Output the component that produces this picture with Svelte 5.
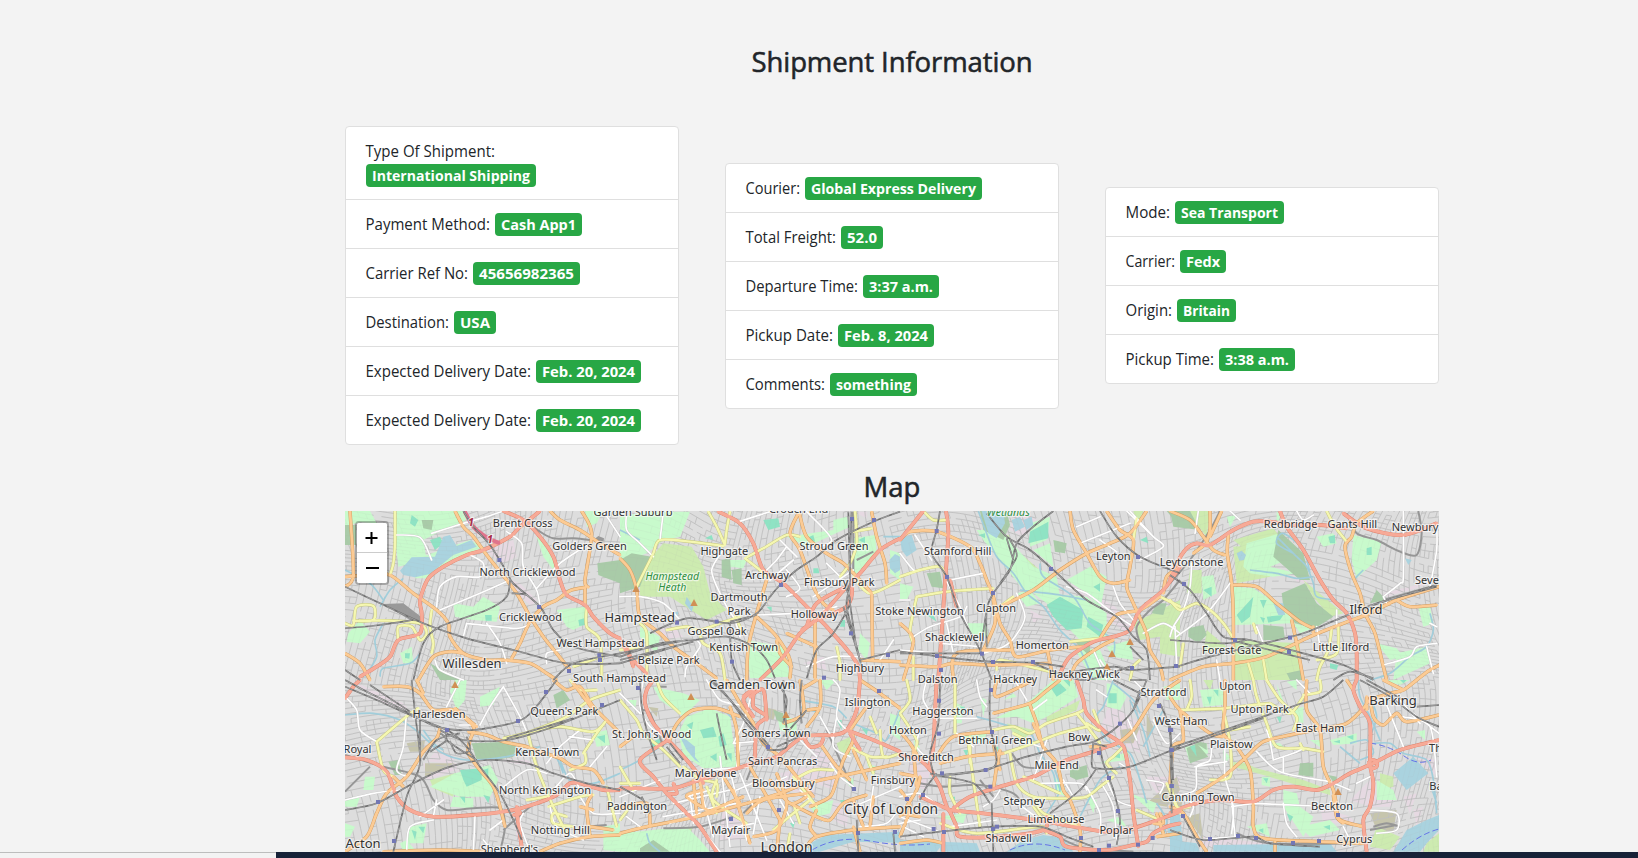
<script>
  const cards = [
    [
      ['Type Of Shipment:', 'International Shipping', 170, 130],
      ['Payment Method:', 'Cash App1', 87, 125],
      ['Carrier Ref No:', '45656982365', 107, 103],
      ['Destination:', 'USA', 42, 84],
      ['Expected Delivery Date:', 'Feb. 20, 2024', 105, 166],
      ['Expected Delivery Date:', 'Feb. 20, 2024', 105, 166],
    ],
    [
      ['Courier:', 'Global Express Delivery', 177, 55],
      ['Total Freight:', '52.0', 42, 91],
      ['Departure Time:', '3:37 a.m.', 76, 113],
      ['Pickup Date:', 'Feb. 8, 2024', 96, 88],
      ['Comments:', 'something', 87, 80],
    ],
    [
      ['Mode:', 'Sea Transport', 109, 45],
      ['Carrier:', 'Fedx', 46, 50],
      ['Origin:', 'Britain', 59, 47],
      ['Pickup Time:', '3:38 a.m.', 76, 89],
    ],
  ];

  // Each sector stores its geometry at three units per map pixel.
  const sectors = [
    {
      x: 340, y: 500,
      park: '15,33 90,33 110,70 60,66 15,80|170,33 370,33 380,60 290,100 250,120 260,180 175,200 165,110|590,110 625,130 650,190 640,210 610,170|340,310 400,320 430,290 480,320 470,365 400,360 345,350|650,330 735,320 740,370 700,390 680,380|25,400 60,360 90,395 60,430 20,425|180,460 215,440 220,490 190,490|245,170 390,120 430,140 330,190 260,235 225,235|735,33 790,33 770,70 740,80',
      wood: '15,75 48,75 48,135 15,135|245,60 280,60 275,90 250,85|772,190 840,180 840,250 800,235 775,225|270,490 360,540 300,540',
      pitch: '215,45 235,60 225,80 210,70|270,120 300,110 310,130 285,150|435,345 455,345 455,362 437,362|715,360 733,355 735,375 718,378|195,460 210,460 208,476 195,474',
      land: '430,150 520,120 530,170 490,190|500,235 540,250 590,300 575,320 520,270',
      water: '180,212 215,172 285,170 310,110 330,105 350,138 395,120 410,140 340,165 270,222 225,232 190,225',
      stream: '190,235 150,270 120,320|130,370 105,420 110,470 75,530|15,210 90,250 130,300|120,530 130,505 210,490 240,460',
      shed: '130,312 190,310 240,348 240,378 160,330|760,120 775,108 792,115 790,130',
      white: '275,100 370,70 440,50 490,33|165,105 240,112 275,180|290,320 300,260 350,230 420,230 430,190 390,165|300,330 420,280 510,240|500,95 545,130 550,200 590,270 600,320|590,265 660,190 750,130|380,370 530,385 570,370|440,370 480,430 500,490|620,490 620,460 660,450|790,33 840,110|285,480 300,510 370,540|380,370 370,410',
      yellow: '165,33 165,130 160,190 150,225|15,370 40,375 50,320 100,318 100,360 40,362|60,362 150,362 240,370 260,400 240,420 215,380 175,380 175,420|275,330 270,380 280,430 275,460|740,320 740,380 780,420 785,540|700,500 780,470',
      orange: '345,33 370,80 400,110 440,165 480,215 530,280 570,350 610,410 650,460 690,510|15,230 90,225 150,225 220,280 290,330 325,370 330,410 370,460 440,480 490,480 570,490 620,520 650,540|840,165 780,130 720,90 660,60 630,33|745,262 735,240 755,100 725,33|735,262 690,272 650,300 610,320 570,365 540,430 515,475|15,460 60,490 90,540|235,540 280,470 330,455 370,460|15,260 40,225 30,33|735,262 735,315',
      red: '60,530 110,500 150,470 175,420 240,400 245,340 240,300 265,235 310,200 380,165 430,150 510,110 535,85 560,65 600,33|490,33 550,60 600,110 640,170 660,240 680,285 735,315 760,350 810,400 840,415',
      pink: '375,36 400,80 440,112 475,128',
      rail: '370,33 400,80 450,135 500,215 520,250 600,320 640,390 700,440 840,470|15,260 120,310 250,370 380,415 520,450 680,490 840,490|15,385 120,375 220,360|510,240 500,290 440,330 300,380 250,430 220,540|515,280 560,285 600,320|640,540 700,490 840,460|15,510 60,540',
      grey: '490,33 545,58 600,95 640,115 700,115 750,120 780,120',
      stations: '478,180 597,321 778,466 780,480 687,513',
    },
    {
      x: 620, y: 460,
      park: '80,155 210,155 180,230 130,240 80,280 0,310 0,170|325,300 380,300 370,325 330,320|700,235 765,225 770,280 700,350|720,520 750,550 740,600 715,570|500,230 640,210 640,180 680,170 690,200 560,260|380,540 490,560 510,650 390,655|810,270 840,280 840,360 810,340|60,500 120,530 110,580 60,530',
      wood: '0,300 35,280 95,290 60,380 0,400|305,300 330,295 335,360 305,350|335,330 365,325 365,375 340,370',
      meadow: '95,290 130,250 215,260 250,320 270,400 320,450 260,480 150,410 60,410 60,370|140,160 200,160 180,200 140,235',
      pitch: '430,180 475,175 480,200 445,210|255,235 275,225 280,240|560,235 580,225 585,245|580,325 595,325 598,340 580,340|440,440 455,440 455,455|665,480 675,480 675,500 660,500|715,240 735,230 735,250',
      land: '120,500 160,500 190,530 130,540|550,610 610,590 620,630|700,155 740,155 740,175',
      water: '808,300 825,282 840,290 840,330 825,340 810,325|200,410 220,440 215,455 195,430|165,455 175,455 172,470',
      stream: '0,210 60,240|790,230 840,230',
      white: '450,155 357,185|20,155 20,210 60,250 100,290|130,155 120,240|480,240 530,290|560,155 635,240 560,270|310,270 275,330 300,400 340,470 370,480|410,465 540,460|450,360 520,300|500,330 540,385 500,410|0,410 60,410 130,430 180,480|195,650 200,620 240,560 230,540|580,410 700,330|610,450 650,440|500,260 470,300 440,330|560,620 640,590 720,590|820,540 780,600|345,480 360,530|620,310 660,350',
      yellow: '330,155 320,210 315,250|265,155 290,200 315,255|50,380 75,330 100,280 120,240 210,245 310,258|380,292 430,265 500,225 540,230|375,295 420,330 440,350|705,155 710,250 690,310 660,350|700,350 750,400 840,360|700,215 755,205|140,510 200,500 240,510 300,490 360,470|240,520 250,550 300,580 315,660|650,560 660,610 660,660|60,490 80,520 80,650|345,470 370,520|0,570 60,560',
      orange: '0,295 30,330 50,390 60,470 120,520 160,560 230,610 290,655|535,160 510,220 540,270 580,380 610,430 640,450|538,160 560,230 620,280 670,310 720,360 755,400|755,155 770,230 795,310 800,370|440,360 410,460 385,560 380,660|585,470 585,655|755,400 758,600|410,470 470,530 510,600 510,655|500,520 590,560|720,600 840,605|470,540 480,580 515,620',
      red: '295,155 360,190 400,250 430,330 490,370 570,450 620,500 690,580 715,620 720,660|840,235 780,270 720,340 690,370|420,660 490,590 540,520 600,470 680,380|545,510 590,480 680,440 690,380 590,430 560,500|0,540 30,590 80,640|20,560 40,620',
      rail: '695,155 690,300 690,370 680,440 710,560 730,640|675,380 690,430 640,520 590,570 560,655|840,155 760,185 650,240 590,290 530,330 480,375 450,410 410,460 330,490 200,475 90,520|0,590 120,550 220,540 320,530 400,560 440,600 465,655|0,600 220,545|0,610 180,555|670,440 720,600|720,600 840,570|680,360 710,570|330,490 335,600 360,660|690,370 685,155|0,580 200,540|330,485 410,465',
      grey: '710,300 760,275|700,155 700,340',
      stations: '696,177 762,180 290,485 171,488 483,375 336,605 804,585 612,653 693,520',
    },
    {
      x: 900, y: 500,
      park: '230,90 300,90 400,200 470,230 480,290 370,270 300,180 250,120|400,280 500,285 560,290 620,340 620,410 540,420 490,370 440,310|390,70 450,50 440,120 390,140|500,240 570,200 620,230 600,330 560,280|0,250 40,260 20,300 0,300|200,370 260,370 265,410 210,400|520,440 600,450 640,540 580,540|350,280 390,270 420,310 380,320|450,130 460,200 400,150|620,440 690,420 700,480 640,470',
      wood: '80,220 120,215 130,265 95,260|525,425 570,420 570,470|770,310 800,310 790,345 755,340|800,33 840,33 840,80|240,33 250,90 310,120 330,75 320,33|460,120 500,130 495,160 465,155',
      meadow: '280,115 325,105 350,150 425,215 400,250 370,235 300,165|700,370 840,300 840,400 720,420|780,400 840,380 840,470 780,460|700,33 730,33 710,80',
      pitch: '390,95 445,65 445,115 385,130|440,315 480,290 550,330 545,385 500,390 460,350|565,350 610,375 600,410 560,380|580,260 600,250 600,275|80,345 100,345 110,365|720,120 740,110 745,130|235,105 255,100 255,115',
      land: '510,250 560,275 640,315 700,380 680,400 600,340|340,50 380,40 410,60 370,110 330,90|390,330 430,350 400,370',
      water: '245,33 310,33 315,70 290,115 265,100|0,115 35,105 50,150 20,170 5,150|335,60 360,50 375,80 345,95|370,60 395,50 400,75 380,90',
      stream: '235,33 260,100 290,170 340,220 380,280 430,320 480,390 540,450 580,540|420,190 430,230 520,290 570,370 640,420 640,470|360,270 480,285 560,300',
      white: '0,160 40,210 60,210|45,105 95,180|150,240 250,220|140,245 180,320 210,400|40,410 90,380 180,350 200,320|350,280 375,350 345,410 310,440 250,460|500,260 560,280 640,340 700,380|540,130 690,70|690,33 760,110 790,140 720,180|640,260 660,310 700,360|600,120 650,155|0,450 160,460 300,450|680,33 760,110|0,300 30,300|120,430 240,440|140,370 160,460|580,450 620,540|730,400 790,370 840,400|640,540 600,480|530,80 600,50',
      yellow: '70,33 100,60 140,60|0,230 60,210 120,200 140,230|50,290 140,275 200,270 280,265|50,290 30,390 40,430|710,55 700,120|780,290 840,320|510,425 600,415|40,540 40,470|290,510 300,480 390,500 470,520|300,320 340,290|690,540 700,500 720,480',
      orange: '0,120 30,95 110,95 210,140 240,190 260,240 280,290 300,370 330,420 350,470 450,450 550,440|510,33 520,90 560,160 600,230 640,250 690,240|300,320 400,270 480,210 560,160 630,130 690,100 740,33|620,33 660,90 700,120 690,200 680,260 700,310 740,400 750,450 780,500 790,540|600,415 650,345 720,330 780,290|280,300 285,370 250,450|0,495 110,500 160,490 280,495 450,490|160,540 170,460 330,450|0,370 40,420 10,540|510,540 530,490 600,440 640,420|840,200 800,230 790,280|440,440 460,540',
      red: '70,33 40,70 0,120|138,33 145,100 135,250 125,400 115,540|150,240 170,320|480,520 510,470 580,425 640,410 690,390 720,330 790,270 840,200',
      rail: '260,40 320,110 390,150 460,210 560,300 650,350 700,410 740,450 750,540|460,33 400,80 350,130 330,210 280,280 260,330 260,440|120,33 110,90 95,160 140,230 180,340 240,450 275,540|0,455 120,470 270,485 400,488 490,500|600,33 650,110 720,170 840,220|330,120 350,170 300,250|0,460 240,460|480,520 640,500 690,510 840,500|690,440 730,480|260,330 240,460|320,115 340,180|400,490 550,540 690,500',
      grey: '840,240 790,300 750,330 710,380 720,430',
      stations: '110,93 141,231 279,279 453,207 714,171 246,461 279,486 399,486 111,468 123,510 696,504 828,498',
    },
    {
      x: 1170, y: 500,
      park: '220,200 230,130 330,100 350,180 300,200 380,220 310,230 240,220|190,260 250,265 350,330 370,370 190,375|95,230 130,225 140,280 100,300|550,105 635,125 620,180 560,235 545,180|440,110 490,100 500,130 460,140|680,460 770,440 780,490 670,540|745,320 780,320 790,370 760,380|370,370 430,385 390,400|620,430 680,445 700,470 660,480|320,33 330,50 320,80|170,50 200,45 180,80',
      wood: '335,280 405,250 440,310 490,350 435,385 375,370 340,320|55,385 100,375 110,405 85,430 55,410|280,375 340,380 345,420 280,420|325,90 400,160 420,240 390,240 310,170|350,520 395,510 400,540 360,540|0,33 60,33 90,90 10,80|620,270 650,300 600,310',
      meadow: '60,33 120,33 110,110 70,60|190,120 310,85 330,110 215,140|400,240 520,340 480,350 430,290|190,140 310,130 300,230 200,250|60,210 95,210 95,280 50,280|190,420 390,430 390,540 190,540|110,390 170,440 100,460',
      pitch: '200,345 250,290 240,350 215,370|270,300 290,300 280,325|290,350 340,345 330,360 295,368|590,145 605,140 605,165 590,165|475,110 495,105 495,130 480,130|100,270 125,260 125,290|480,490 505,495 500,510 480,505|270,350 285,355 280,370',
      land: '640,280 800,240 740,265 650,290|0,200 20,200 10,260|250,200 270,210 290,225|370,230 410,215 410,250 380,245',
      water: '200,160 215,152 228,165 222,180 208,182|310,310 340,310 345,345 325,345|705,175 725,180 715,195',
      stream: '320,110 380,170 410,200 430,250 440,290 500,300|370,160 320,130 340,100 400,150 420,220|240,210 320,220 380,235 430,230|780,340 790,390 770,440 720,470 660,520 600,540|580,210 555,235',
      white: '65,190 60,260 40,330 10,380 0,410|15,380 20,500|20,410 110,340 180,250|700,33 700,230 690,250 640,290|640,290 650,310|800,70 800,150 780,260|640,495 720,470 740,440 800,430|380,33 400,60 430,45|440,380 450,440|260,380 280,430|140,480 150,540|780,370 800,380|85,33 75,100|210,60 180,33|500,330 500,380|770,440 790,520',
      yellow: '0,300 30,330 80,310 120,330 160,370 190,415|470,33 495,80 530,125|485,385 475,450 450,500 440,540|250,370 260,400|505,380 500,460 440,480|235,490 250,540|280,480 290,540|40,430 30,500',
      orange: '0,33 60,60 100,110 130,150 165,165|70,160 110,130|120,33 120,90 110,125|155,33 120,110|175,105 172,160 185,250 190,350 190,540|185,255 260,260 320,310 390,365 430,385|610,33 560,70 545,110 525,140 545,220 570,280 585,340 615,400 640,500 650,540|0,540 100,500 190,490 290,470 420,410 520,370 600,340 680,300 840,250|680,300 720,320 800,315|365,360 380,430 400,540|840,480 780,510 740,540|580,345 660,310|430,400 430,380',
      red: '0,240 20,190 50,145 80,130 120,135 190,90 250,65 300,65 370,75 450,75 530,85|330,33 350,80 400,150 450,240 490,300 530,340 555,400 560,460 560,540|520,40 590,85 700,105 800,70',
      rail: '0,225 60,270 110,340 160,410 240,420 400,460 520,495 610,540|20,500 120,470 260,435 400,400 520,350 640,305 800,255|0,420 160,430 230,420|500,360 620,310 800,260|490,540 540,515 610,535|200,425 420,480',
      grey: '530,40 560,100 620,120 690,155 740,165 755,100 745,33|150,33 120,90 60,180 0,250|800,255 640,300',
      stations: '42,252 195,420 360,413 357,456 18,498',
    },
    {
      x: 340, y: 680,
      park: '345,280 450,255 475,300 450,350 360,350 270,320|330,33 345,0 380,0 375,60 350,90|75,290 105,290 100,330 70,330|210,440 260,430 250,490 200,490|420,50 480,20 460,75 420,80|15,430 45,440 30,470 15,470|340,350 400,355 400,385 330,380|790,440 840,430 840,515 790,510|0,360 60,350 50,380 15,380|760,160 800,150 810,195 770,200|180,490 200,480 230,515 190,515',
      wood: '395,190 500,185 530,200 520,230 470,240 410,240|145,245 175,240 185,285 165,285|640,45 670,30 690,60 650,85',
      meadow: '270,300 345,280 340,350 280,325',
      pitch: '360,270 425,265 425,300 380,320 370,300|430,270 445,265 445,290|235,440 255,440 250,460|360,350 375,350 375,370|770,170 795,165 795,190|430,345 450,350 445,370|215,450 230,455 225,480',
      land: '250,250 350,250 350,270 260,300|30,0 190,70 210,95 130,70|290,210 345,230 340,250 260,245|520,380 540,380 550,500 530,480|470,240 560,240 600,260 520,250',
      brown: '200,190 255,180 250,215 210,215|255,250 345,250 255,290',
      water: '15,495 25,490 25,500 15,510',
      stream: '15,105 100,100 180,120 240,160 300,215 380,240 500,230 600,200|250,150 280,190 310,210|660,240 690,300 760,310 840,280|620,230 650,235 670,280',
      white: '15,50 50,90 60,150 110,185|200,90 190,200 170,270 200,290|360,0 320,80|420,135 450,80 490,20|490,20 540,110 570,180|360,135 410,135|15,360 100,340 180,330|200,515 210,440 280,420|405,410 400,515|310,360 240,410|480,330 560,270 620,280|640,330 690,280 720,330|550,400 540,430 570,515|630,380 650,440 730,480|690,170 760,180|620,250 660,200 720,150|280,410 290,360|800,200 750,260|450,450 490,420|720,350 760,400 840,400|430,480 460,515',
      yellow: '110,185 130,270 160,290|110,185 205,105 235,85|490,175 570,155 680,110 750,60 840,30|565,165 590,260 640,380 680,460|570,155 660,140 760,155 800,120|735,220 735,250 690,270|625,380 720,350 760,345|730,220 770,160 800,120|620,350 560,360|680,410 640,400 640,430 700,440|690,0 720,30 770,30|800,320 830,440',
      orange: '130,20 200,20 240,40 280,90 340,90 400,140 390,180 385,220 420,270 460,320 480,380 495,440|230,0 250,40|15,515 80,470 110,400 140,340 200,290 250,215 290,175 300,145|385,155 440,165 490,185 560,200 600,215 660,235 700,260 760,270 790,310|640,0 680,30 720,20 760,80 820,140 840,160|130,515 300,510 440,515|600,515 660,490 750,470 840,465|755,345 740,380 750,470|345,85 410,140|160,290 190,320|750,440 820,450|720,380 760,390|700,10 760,90',
      red: '15,232 80,240 140,275 170,350 210,390 280,410 400,405 520,390 590,370 650,345 690,310 720,310 790,330 840,330|15,55 40,20 60,0|530,395 545,500|530,380 540,400 520,405',
      rail: '15,0 90,40 200,95 290,140 400,150 530,125 580,90 650,0|15,20 110,60 210,105 330,155 380,200 420,260 480,340 520,420 545,480|215,0 225,100 240,250 200,350 160,515|15,390 110,370 220,310 330,260 440,240 560,250 640,280 740,310 840,330|300,150 370,180 500,180 640,140 840,60|320,155 320,180 370,215 410,240|270,215 320,180 300,160|240,90 240,230|90,15 210,95|50,20 190,90|330,185 350,220 390,210 380,170|250,240 290,180 360,160|500,175 700,115',
      grey: '15,225 130,260 240,290 280,360 320,390 400,385 480,385 495,440 480,515|15,335 90,260|740,440 800,435|490,450 570,380',
      stations: '618,36 786,75 534,123 321,150 114,366 162,483',
    },
    {
      x: 620, y: 680,
      park: '175,160 200,110 270,85 330,110 350,260 250,265 190,225|100,20 190,40 240,60 190,110 120,60|0,460 200,440 240,480 270,515 0,515|470,100 530,120 530,170 480,150|810,100 840,110 840,180 810,160|570,380 640,360 630,400 590,410|600,0 650,0 620,30|740,250 770,260 760,290|670,300 700,295 700,330|20,60 50,60 45,90',
      wood: '460,90 490,100 490,130 470,120|60,505 100,480 150,515 60,515',
      meadow: '20,480 80,470 120,515 20,515|100,450 220,440 180,515 140,500|650,190 690,170 690,230 660,220',
      pitch: '200,135 220,125 215,150|240,150 280,140 290,170 250,175|295,170 310,160 320,195 300,200|90,190 120,175 125,200 100,205|650,120 665,120 665,150|320,220 335,220 335,245|270,230 290,220 290,245|725,145 745,145 740,165|510,430 525,425 520,445|660,360 675,360 670,380',
      land: '240,95 300,100 290,145 240,130|480,280 560,260 590,350 500,330|580,200 650,240 640,330 560,300|640,370 690,370 680,440 640,420|310,370 360,380 370,480 300,480',
      brown: '430,80 470,90 460,120 430,110|85,80 115,85 110,110',
      water: '180,170 200,180 225,200 225,230 240,250 225,240 200,210|570,490 620,465 840,455 840,488 700,485 600,515 560,515',
      stream: '0,270 60,240 150,180|165,150 200,100 260,85 310,90 350,130|540,60 640,80 680,115|700,130 770,160 800,180 840,90|80,460 90,490 120,515|540,80 600,100',
      white: '70,0 60,80 90,140 150,180|0,40 60,100|390,60 370,130 340,190|340,190 400,185|640,0 660,30 650,110 680,150|260,0 300,60 360,75|270,270 390,260|300,230 330,500|330,270 380,480|210,350 220,430|240,320 280,470|0,350 120,300|160,370 330,330|130,410 350,370|700,380 840,320|720,440 800,430 840,380|540,180 590,230|600,110 640,180|650,110 640,200 690,230|360,280 400,380 440,480|20,410 60,440|430,320 500,290|150,430 240,400|240,440 300,515|480,360 520,430|760,320 750,390|630,250 660,290 700,320|350,330 420,300|420,350 400,460|200,350 270,330|360,190 350,260|540,330 580,370|310,450 400,430|450,0 490,30',
      yellow: '110,0 130,50 180,100|0,60 50,120 70,160 130,210 180,260|240,300 290,310 290,350|520,300 580,270 640,270|520,290 590,380|780,150 790,230 840,220|750,110 770,160|290,300 280,360 380,430|0,310 60,310|460,450 520,400 570,360|30,380 0,420|740,230 760,280|260,320 290,400|190,260 240,300|690,200 750,230 800,230|510,460 500,515|520,370 540,430|0,260 40,330',
      orange: '360,110 290,85 220,90 180,120 160,150 150,180|330,80 350,150 355,265|320,0 360,70 400,130 430,190 480,230 530,290 580,350|540,0 550,100 490,130|600,0 600,80 560,140|0,460 80,440 230,410 380,370 480,340 560,310 700,280 840,250|720,0 780,40 840,85|690,150 700,180 670,240 650,300 630,350 570,380|230,410 300,380 370,350|250,330 200,350 280,400|470,280 500,370 470,450 400,470|510,370 590,410 630,420 670,370 740,345|0,385 80,370 90,440|240,300 250,380|310,290 360,370|540,30 590,0|560,500 590,470 700,450 840,440|560,90 600,85|480,420 470,515|700,360 730,440|0,200 40,170|600,190 650,260 690,300|700,210 740,300|740,80 690,150|340,330 390,490|380,400 430,360 560,340|390,260 480,420|700,440 720,515|760,350 750,440|590,390 570,440 590,470|220,300 230,400|450,300 510,370 560,350',
      red: '100,0 80,30 75,70 100,130 145,180 200,240 240,290 250,310|0,325 70,325 160,325 240,300 320,275 400,250 470,230 550,170 640,165 680,150 710,90 720,0|145,180 60,240 100,290 140,340 200,400 240,440 290,515|680,150 760,180 840,215|370,50 400,30 400,80 440,110 410,140 405,240|400,30 370,60 400,110|550,170 570,200 600,195 610,175|140,340 170,340 160,310|690,160 720,210|390,50 430,30 440,120',
      rail: '270,0 330,60 380,130 440,200|60,0 65,80 80,150 110,240|490,0 495,100 500,200 440,210|545,0 540,60 545,130|480,20 500,60 490,130|280,0 450,200|150,190 190,240|140,200 180,250|560,90 490,170|470,200 560,160|65,350 90,400|710,420 715,515|820,460 825,515|290,100 300,150 320,240|0,320 70,360',
      grey: '120,20 140,20|60,90 90,100 130,200|130,445 240,440 340,410|400,250 380,300|620,150 700,330|370,400 400,370',
      stations: '777,33 444,201 702,327 477,390 333,417 825,456 54,24 714,459',
    },
    {
      x: 900, y: 680,
      park: '285,115 380,70 460,0 520,0 535,50 440,110 400,130 350,110|620,10 650,15 680,50 660,90 620,80|460,290 490,310 500,350 470,340|310,60 340,40 350,50|170,160 260,160 250,190 190,180|560,350 590,360 580,400|690,340 770,370 760,400|240,50 260,60 250,110|40,180 60,200 50,220|600,250 690,210 680,240|620,420 660,410 680,440|110,410 200,400 190,430|790,20 840,10 840,60 800,60|170,70 190,80 185,130 165,130',
      wood: '510,270 560,255 565,290 530,300 510,290',
      meadow: '440,110 540,60 530,90 440,130|320,130 400,150 360,190',
      pitch: '450,20 480,10 500,30 470,50|490,0 510,0 510,20|625,40 650,40 650,70 625,70|280,200 295,200 295,215|640,230 660,220 660,235|180,80 195,80 190,100|470,310 485,315 480,335|150,350 165,350 165,365|190,210 205,210 200,230',
      land: '610,60 720,130 720,220 660,190|30,230 90,270 80,330 20,310|740,290 840,290 840,350 770,340|620,90 660,110 640,170 600,150',
      brown: '660,150 720,140 700,190 665,190|740,100 760,140 740,190|740,370 830,290 840,330 800,380',
      water: '0,480 60,480 130,490 110,515 0,515|320,515 370,480 430,465 490,475 520,515|800,440 840,400 840,515 820,515|120,485 230,490 240,515 120,515',
      stream: '230,110 300,130 390,160 420,220 460,280 470,340|640,0 610,80 590,110 620,180 690,220 720,300 740,370|690,60 730,150 750,230|640,10 700,60 720,100|530,430 600,300 660,260|460,260 480,330 440,400|730,200 790,90|770,370 800,420 790,470',
      white: '230,0 240,50 260,80|80,0 70,60 110,120|170,160 220,200|120,115 230,115|360,180 420,200|350,10 380,60|440,60 400,90|520,350 490,300|300,330 280,360 250,380|610,320 640,380 650,480|560,320 600,400 600,460|0,410 130,460|0,430 60,420|340,360 420,420|10,440 70,470|740,300 790,310 780,340|760,120 800,190 840,160|0,350 60,340 120,380|710,180 680,110|660,250 690,270|60,150 50,200 90,240|620,300 650,360 700,380|590,30 620,50|700,0 750,50|440,180 400,300|150,440 290,420|420,310 540,310 560,330',
      yellow: '165,0 165,160|280,150 340,140 390,160 440,130 530,100 550,90|310,220 400,190 480,160 560,140|205,190 220,300 240,440|150,290 150,340 180,400|120,430 230,460 420,440 440,460|330,220 350,310 400,350 510,355 560,350 600,320 640,290|0,100 50,180 40,220|530,100 570,150 600,190|560,130 600,150 580,90|640,230 620,250 650,280|710,390 780,420|400,380 430,420|20,0 30,60 0,100|640,230 670,200|800,310 840,400|340,160 400,190|400,350 430,400 540,440|210,170 210,250|370,290 480,340',
      orange: '280,100 390,70 430,40 480,0|290,0 290,50 400,0|390,75 410,130 430,200 470,250 490,330 510,360 540,450 540,515|110,230 160,170 280,155|0,155 30,190 60,240|120,250 200,230 310,220|300,210 290,260 280,330|570,200 640,195 700,150 760,60 840,0|0,280 50,290|0,490 80,480 130,490|280,190 300,270|0,330 30,380 0,470|770,470 840,460|0,410 50,330 60,290|40,210 50,320|770,400 790,460|400,130 420,180|760,430 790,430 780,400|60,410 0,400',
      red: '110,0 105,100 100,200 90,260 120,320 140,380 150,395|0,225 60,240 100,280|150,390 250,400 370,415 440,425 520,440 620,455 700,445 840,395|160,385 210,350 300,320 400,290 440,270 500,240 580,215 650,190|530,0 550,60 560,100 620,160 670,200 690,300 700,400 715,500|150,395 170,440 180,470 300,470 430,450 440,410|130,400 130,515|430,450 480,470 500,500 620,510 700,495 740,485 760,460 800,440 840,430|150,390 60,350',
      rail: '120,0 115,130 90,220 100,280|270,0 270,130 290,240 260,270 130,285 90,280|120,285 250,270 380,230 500,200 580,185 640,150 700,90 740,0|100,285 220,310 270,370|580,185 575,250 590,265 690,260 840,200|590,265 540,330 450,400|0,470 120,455 280,440 420,440 500,470 580,500|600,200 610,250 640,330 660,420 650,495|640,0 700,30 740,50|780,70 810,160 815,400|110,280 80,320 60,360|275,370 280,515|690,0 740,0|580,190 620,200|700,90 720,30',
      grey: '60,310 130,320 240,315 340,340 370,380|335,220 370,260 440,265|420,440 540,500 700,515|240,300 280,350',
      stations: '117,62 273,30 117,161 276,156 126,280 257,270 271,320 660,131 777,78 810,150 597,219 815,210 627,294 815,318 654,393 101,447 132,456 279,447 291,440 543,474 627,497 714,494 758,474 597,510 21,357 69,345',
    },
    {
      x: 1170, y: 680,
      park: '90,30 160,25 160,75 100,80|45,200 110,190 115,220 60,250|480,180 560,160 560,190 490,195|275,290 300,290 300,320 275,315|340,330 380,340 390,380 430,410 400,470 340,380|420,180 460,180 455,205|370,90 400,80 400,130 375,120|320,10 330,60 350,90|390,440 480,420 510,450 420,470|740,155 765,150 765,180|350,5 380,0 380,30|620,300 670,330 680,360 620,360|290,190 330,190 350,210|640,0 720,0 690,15|160,210 180,230 160,260|230,440 290,430 300,470',
      wood: '50,205 80,190 115,230 60,250|390,250 430,248 430,290 385,285|475,285 500,290 500,320|60,180 110,190 110,210',
      meadow: '190,245 280,270 400,300 480,330 480,345 280,285 190,260|630,280 670,290 670,320 630,330|620,440 690,470 660,510 600,500|770,490 807,460 807,515 760,515|200,240 250,260 250,275|100,0 130,0 120,30',
      pitch: '110,50 125,50 120,75|130,30 145,30 145,50|490,185 510,180 510,190|530,170 550,165 550,180|60,200 75,195 80,230|280,295 295,295 290,310|320,110 335,110 330,130|265,450 280,445 280,460|350,400 370,410 360,425|460,440 480,435 480,450|690,0 710,0 700,10',
      land: '100,470 300,490 280,505 90,500|700,350 740,340 720,400|730,390 760,380 740,440|540,360 600,300 680,350 660,380 600,380|720,220 800,240 800,290|450,380 540,410 560,430 460,430',
      brown: '600,400 680,390 670,460 620,450|50,410 90,400 100,480|10,350 40,350 30,400',
      water: '670,515 710,450 770,420 807,405 807,450 770,490 750,515|670,280 730,230 775,280 710,330|130,495 480,490 500,515 130,515|0,380 30,400 40,515 0,515|0,480 80,490 90,515 0,515',
      stream: '565,0 570,50 600,110 630,180|540,190 590,180 610,220 570,240|510,200 570,250|610,190 660,190 700,220 770,240 790,300 800,400|780,310 800,370|600,50 620,110 600,170',
      white: '125,180 120,240 80,260 75,330 0,350|75,260 170,245|165,200 165,290 190,380 185,460|260,215 330,275 480,305|310,240 370,220 400,205|340,275 340,230|300,180 310,240|640,50 700,200|690,60 750,130|250,370 430,378|185,360 195,470|340,370 350,430 380,470|600,390 680,400 680,450 620,460|700,110 780,140 800,290|90,480 130,475 200,470|560,310 600,290|380,0 420,40|50,350 70,380 60,410|185,380 250,370|0,130 30,130|520,440 540,480|300,180 290,150|730,100 807,160|480,305 540,330',
      yellow: '30,90 160,85 250,75 300,70|60,0 65,50 50,90|250,0 260,50 290,130 320,200 400,205 460,215|160,90 180,190 180,290 120,300|290,0 330,60 380,110 370,150|400,45 450,35 450,0|300,70 360,100 400,50|0,300 20,380 60,380|180,150 240,140|390,190 400,210',
      orange: '165,0 165,80 160,160 200,200 240,270 250,380 250,440 280,475 450,485 580,490|0,50 30,90 120,160 160,170|410,0 410,90 450,150 460,260 490,330 500,380 510,420 580,440|80,340 160,290 230,230 280,185 360,165 460,145 530,130 580,85 600,60 660,40 700,30 740,0|600,50 610,110 640,135 680,100 710,125 807,105|0,380 40,400 80,470 110,515|315,480 315,515|590,50 590,90|640,0 700,30|30,90 40,180 10,200 0,310|490,345 500,410 520,430|530,0 550,30',
      red: '0,400 60,375 150,360 250,365 310,330 370,320 440,330 490,310 540,280 610,250 690,210 807,180|560,0 550,30 570,80 600,130 600,250 610,310 600,380 580,420 590,515|595,250 605,240 620,245 620,260 605,265 595,250',
      rail: '0,205 120,165 250,120 380,75 460,50 520,0|570,0 660,50 740,110 807,140|0,450 100,480 250,470 300,490 450,500|740,80 807,75|0,200 5,300|0,215 140,165 280,115|0,130 10,300|590,0 700,60|40,410 90,500',
      grey: '610,440 650,430 690,440|600,450 680,435|200,460 300,490 560,490',
      stations: '5,210 5,318 39,408 120,477 204,468 258,474 369,489 447,483 504,405 3,150',
    },
  ];

  const areas = [
    ['land', '#e6d9e2'], ['brown', '#c6c5ad'], ['meadow', '#cdebb0'], ['park', '#c8facc'],
    ['wood', '#a9cba8'], ['pitch', '#8fe3c4'], ['water', '#aad3df'], ['shed', '#999999'],
  ];
  const casings = [
    ['white', '#c4c2c2', 6.5], ['yellow', '#c5c67e', 9.5], ['orange', '#cf9b60', 10.5], ['red', '#dc806b', 11.5],
  ];
  const roads = [
    ['white', '#ffffff', 5], ['yellow', '#f5f7b1', 7], ['orange', '#fccb94', 8], ['red', '#f7aa97', 9.5], ['pink', '#df748c', 12],
  ];

  const labels = [
    [522.7, 527, 'Brent Cross'], [589.5, 549.5, 'Golders Green'], [527.5, 576, 'North Cricklewood'],
    [530.5, 620.7, 'Cricklewood'], [472, 668, 'Willesden', 13], [600.5, 647, 'West Hampstead'],
    [639.7, 622.3, 'Hampstead', 13], [633, 516, 'Garden Suburb'], [619.5, 682, 'South Hampstead'],
    [798.7, 513, 'Crouch End'], [724.3, 554.7, 'Highgate'], [834, 550, 'Stroud Green'],
    [767, 578.7, 'Archway'], [839.3, 586.3, 'Finsbury Park'], [739, 601, 'Dartmouth'], [739, 615, 'Park'],
    [814.3, 618, 'Holloway'], [717, 634.7, 'Gospel Oak'], [743.7, 651, 'Kentish Town'],
    [668.7, 664, 'Belsize Park'], [860, 671.7, 'Highbury'], [957.7, 555, 'Stamford Hill'],
    [1113.3, 560, 'Leyton'], [1191.5, 565.7, 'Leytonstone'], [919.5, 615, 'Stoke Newington'],
    [996, 611.7, 'Clapton'], [954.7, 640.7, 'Shacklewell'], [1042.3, 649.3, 'Homerton'],
    [1084.3, 678, 'Hackney Wick'], [937.7, 683, 'Dalston'], [1015.3, 683, 'Hackney'],
    [1290.7, 527.7, 'Redbridge'], [1352.3, 527.7, 'Gants Hill'], [1415, 531, 'Newbury'],
    [1427, 583.7, 'Seve'], [1366, 614, 'Ilford', 13], [1341, 650.7, 'Little Ilford'],
    [1231.7, 653.7, 'Forest Gate'], [439, 718, 'Harlesden'], [564.3, 715.3, "Queen's Park"],
    [357.5, 753, 'Royal'], [547.3, 756, 'Kensal Town'], [545, 794, 'North Kensington'],
    [637, 810, 'Paddington'], [560.3, 834.3, 'Notting Hill'], [363, 848, 'Acton', 13],
    [509.3, 853, "Shepherd's"], [752.3, 688.5, 'Camden Town', 13], [651.7, 738, "St. John's Wood"],
    [776, 737.3, 'Somers Town'], [782.7, 764.7, 'Saint Pancras'], [705.7, 777, 'Marylebone'],
    [783.3, 787.3, 'Bloomsbury'], [867.7, 706, 'Islington'], [730.7, 834, 'Mayfair'],
    [786.7, 852, 'London', 14.6], [891, 813.5, 'City of London', 13.8], [908, 734, 'Hoxton'],
    [893, 784, 'Finsbury'], [943, 714.7, 'Haggerston'], [995.3, 744, 'Bethnal Green'],
    [926, 761, 'Shoreditch'], [1079, 741, 'Bow'], [1056.7, 768.7, 'Mile End'],
    [1024.3, 804.7, 'Stepney'], [1056, 823.3, 'Limehouse'], [1116.3, 834, 'Poplar'],
    [1008.7, 842, 'Shadwell'], [1163.5, 695.7, 'Stratford'], [1181, 725, 'West Ham'],
    [1198, 801, 'Canning Town'], [1235.3, 690, 'Upton'], [1259.7, 713.3, 'Upton Park'],
    [1231.3, 748, 'Plaistow'], [1320, 731.7, 'East Ham'], [1393, 705, 'Barking', 13],
    [1332, 810.3, 'Beckton'], [1354.3, 843.3, 'Cyprus'], [1435.5, 752.3, 'Th'], [1436, 790, 'Ba'],
  ];
  const greenLabels = [[672.3, 579.5, 'Hampstead'], [672.3, 591, 'Heath'], [1008.3, 516, 'Wetlands']];
  const peaks = [[636, 589], [694, 603], [455, 685], [691, 697], [786, 715], [1130, 642], [1112, 654], [1107, 667], [1338, 792]];

  const shapes = (s) => (s || '').split('|').filter(Boolean)
    .map((p) => p.trim().split(' ').map((c) => c.split(',').map(Number)));

  const polygon = (s) => shapes(s).map((p) => 'M' + p.map((c) => c.join(' ')).join('L') + 'Z').join('');

  function curve(s) {
    return shapes(s).map((p) => {
      let d = `M${p[0]}`;
      for (let i = 0; i < p.length - 1; i++) {
        const a = p[i - 1] || p[i], b = p[i], c = p[i + 1], e = p[i + 2] || c;
        const k = 7;
        d += `C${b[0] + (c[0] - a[0]) / k},${b[1] + (c[1] - a[1]) / k} ${c[0] - (e[0] - b[0]) / k},${c[1] - (e[1] - b[1]) / k} ${c}`;
      }
      return d;
    }).join('');
  }

  // Residential streets: a warped lattice with missing segments.
  function streets() {
    let seed = 41;
    const rnd = () => ((seed = (seed * 16807) % 2147483647) / 2147483647);
    const warp = (x, y) => [
      345 + x + 16 * Math.sin(y / 47 + x / 110) + 9 * Math.sin(x / 39),
      511 + y + 15 * Math.sin(x / 53 - y / 90) + 8 * Math.cos(y / 31 + x / 70),
    ];
    let d = '';
    const f = (p) => p.map((n) => n.toFixed(1)).join(' ');
    for (let y = -36; y < 385; y += 6) {
      for (let x = -36; x < 1140; x += 6) {
        const flip = Math.sin(x / 43) * Math.cos(y / 37) > 0;
        const p = warp(x, y);
        if (rnd() < (flip ? 0.93 : 0.38)) d += `M${f(p)}L${f(warp(x + 6, y))}`;
        if (rnd() < (flip ? 0.38 : 0.93)) d += `M${f(p)}L${f(warp(x, y + 6))}`;
      }
    }
    return d;
  }
  const streetPath = streets();
  const points = (s) => s.split(' ').map((c) => c.split(',').map(Number));
</script>

<main>
  <div class="content">
    <h3 class="title">Shipment Information</h3>

    <div class="cards">
      {#each cards as rows}
        <ul class="card">
          {#each rows as [label, value, width, labelWidth]}
            <li>
              <svg class="label" width={labelWidth} height="24"><text x="-0.5" y="18" textLength={labelWidth - 0.5} lengthAdjust="spacingAndGlyphs">{label}</text></svg>
              <span class="badge" style:width="{width}px">
                <svg width={width} height="22"><text x="6" y="17" textLength={width - 12} lengthAdjust="spacingAndGlyphs">{value}</text></svg>
              </span>
            </li>
          {/each}
        </ul>
      {/each}
    </div>

    <h3 class="map-title">Map</h3>
    <div class="map">
      <svg viewBox="345 511 1094 341" width="1094" height="341" fill="none" stroke-linejoin="round">
        <rect x="345" y="511" width="1094" height="341" fill="#dddddd" />
        {#each areas as [key, color]}
          {#each sectors as s}
            <path d={polygon(s[key])} fill={color} transform="translate({s.x} {s.y}) scale(.33333)" />
          {/each}
          {#if key === 'brown'}
            <path d={streetPath} stroke="#c2c2c2" stroke-width=".9" />
          {/if}
        {/each}
        {#each sectors as s}
          <path d={curve(s.stream)} stroke="#a1cedb" stroke-width="5" transform="translate({s.x} {s.y}) scale(.33333)" />
        {/each}
        <path d={streetPath} stroke="#aaaaaa" stroke-width=".7" opacity=".12" />
        <path d="M812 850Q838 835 870 841T930 844M1010 850Q1035 838 1065 850M1402 850Q1420 834 1439 829M1370 743Q1390 746 1404 756T1431 760" stroke="#6574e8" stroke-dasharray="6 3" />
        {#each sectors as s}
          <path d={curve(s.grey)} stroke="#969696" stroke-width="6" transform="translate({s.x} {s.y}) scale(.33333)" />
        {/each}
        {#each casings as [key, color, width]}
          {#each sectors as s}
            <path d={curve(s[key])} stroke={color} stroke-width={width} transform="translate({s.x} {s.y}) scale(.33333)" />
          {/each}
        {/each}
        {#each roads as [key, color, width]}
          {#each sectors as s}
            <path d={curve(s[key])} stroke={color} stroke-width={width} stroke-linecap="round" transform="translate({s.x} {s.y}) scale(.33333)" />
          {/each}
        {/each}
        {#each sectors as s}
          <g transform="translate({s.x} {s.y}) scale(.33333)">
            <path d={curve(s.rail)} stroke="#707070" stroke-width="5" />
            <path d={curve(s.rail)} stroke="#c9c9c9" stroke-width="1.5" stroke-dasharray="26 9" />
            {#each points(s.stations) as [x, y]}
              <rect x={x - 6} y={y - 6} width="12" height="12" fill="#7377b5" />
            {/each}
          </g>
        {/each}
        {#each peaks as [x, y]}
          <path d="M{x} {y - 4}l3.7 7h-7.4z" fill="#d08f55" />
        {/each}
        <g class="places">
          {#each labels as [x, y, name, size = 11]}
            <text {x} {y} font-size={size}>{name}</text>
          {/each}
          {#each greenLabels as [x, y, name]}
            <text class="green" {x} {y}>{name}</text>
          {/each}
          <text class="route" x="471" y="526">1</text>
          <text class="route" x="490" y="543">1</text>
        </g>
      </svg>
      <div class="zoom">
        <button aria-label="Zoom in"><svg width="30" height="30"><path d="M8.500 15h12M14.500 9v12" /></svg></button>
        <button aria-label="Zoom out"><svg width="30" height="30"><path d="M9 15h13" /></svg></button>
      </div>
    </div>
  </div>
  <footer><div class="status"></div><div class="strip"></div></footer>
</main>

<style>
  :global(body) { margin: 0; background: #f3f3f3; overflow: hidden; }
  main {
    height: 858px;
    overflow: hidden;
    background: #f3f3f3;
    color: #212529;
    font-family: "Open Sans", "Noto Sans", sans-serif;
  }
  .content { width: 1094px; height: 852px; margin-left: 345px; overflow: hidden; }
  h3 {
    margin: 0;
    text-align: center;
    font-weight: 500;
    font-size: 27.5px;
    line-height: 34px;
    -webkit-text-stroke: 0.55px #212529;
  }
  .title { padding-top: 45px; height: 81px; letter-spacing: -0.1px; }
  .cards { display: grid; grid-template-columns: repeat(3, 334px); gap: 46px; align-items: center; }
  .card {
    box-sizing: border-box;
    margin: 0;
    padding: 0;
    list-style: none;
    background: #fff;
    border: 1px solid #dfdfdf;
    border-radius: 4px;
  }
  li { display: flex; flex-wrap: wrap; column-gap: 4px; padding: 12px 20px; }
  li + li { border-top: 1px solid #dfdfdf; }
  li:first-child:nth-last-child(6) { flex-direction: column; }
  li svg { display: block; overflow: visible; }
  .label text { fill: #212529; font-size: 15.5px; }
  .badge { height: 23px; margin-top: 1px; background: #28a745; border-radius: 4px; }
  .badge text { fill: #fff; font-size: 15px; font-weight: 700; }
  .map-title { padding-top: 25px; height: 41px; }
  .map { position: relative; height: 341px; overflow: hidden; }
  .map > svg { display: block; }
  .places text {
    font-family: "Noto Sans", sans-serif;
    text-anchor: middle;
    fill: #333;
    stroke: rgba(255, 255, 255, 0.62);
    stroke-width: 2.4px;
    paint-order: stroke;
  }
  .places .green { font-size: 10.5px; font-style: italic; fill: #319044; }
  .places .route { font-size: 10px; font-weight: 700; font-style: italic; fill: #a62845; }
  .zoom {
    position: absolute;
    left: 10px;
    top: 10px;
    border: 2px solid rgba(0, 0, 0, 0.25);
    border-radius: 4px;
    background-clip: padding-box;
  }
  .zoom button { box-sizing: border-box; display: block; width: 30px; height: 30px; padding: 0; border: 0; background: #fff; }
  .zoom button:first-child { border-bottom: 1px solid #ccc; border-radius: 2px 2px 0 0; }
  .zoom button:last-child { border-radius: 0 0 2px 2px; }
  .zoom svg { display: block; }
  .zoom path { stroke: #000; stroke-width: 2; }
  footer { display: flex; height: 6px; }
  .status { box-sizing: border-box; width: 276px; border-top: 1px solid #bdbdbd; background: #f3f3f3; }
  .strip { flex: 1; background: #172238; }
</style>
